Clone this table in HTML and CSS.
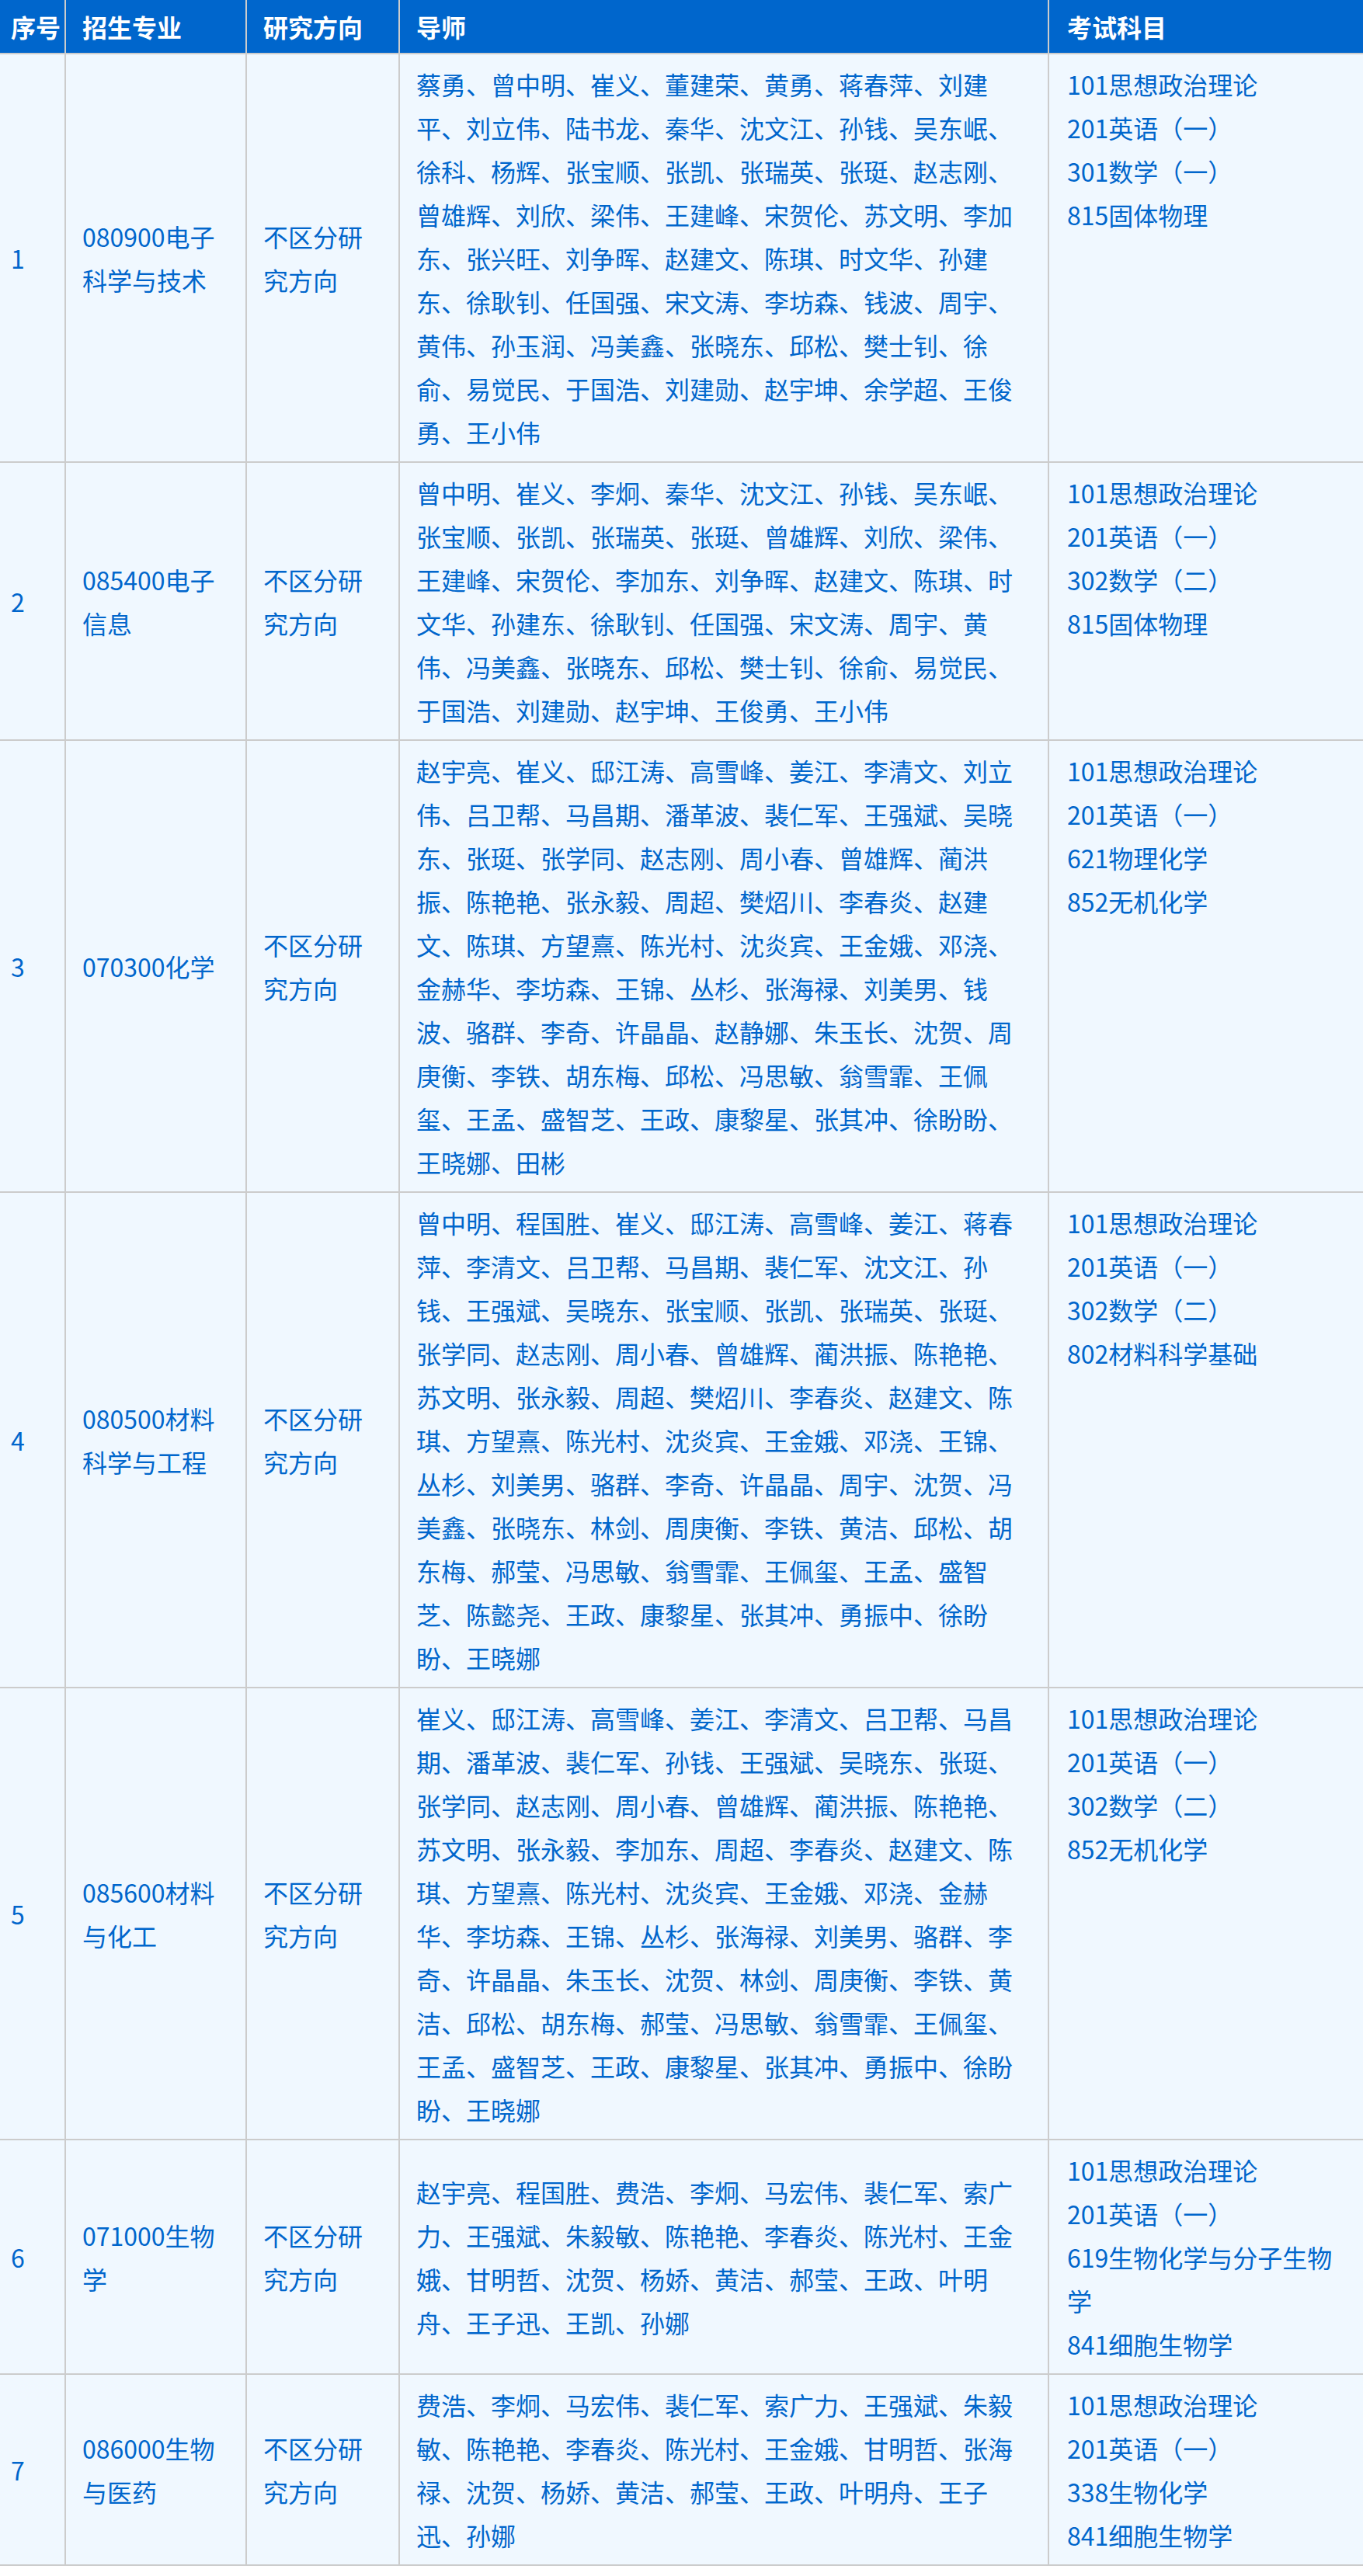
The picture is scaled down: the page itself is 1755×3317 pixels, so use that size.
FILE: index.html
```html
<!DOCTYPE html>
<html lang="zh-CN">
<head>
<meta charset="utf-8">
<title>招生专业与导师</title>
<link rel="stylesheet" href="styles.css">
</head>
<body>
<table class="plan">
  <colgroup>
    <col class="c-no">
    <col class="c-major">
    <col class="c-dir">
    <col class="c-tutor">
    <col class="c-exam">
  </colgroup>
  <thead>
    <tr>
      <th class="no">序号</th>
      <th>招生专业</th>
      <th>研究方向</th>
      <th>导师</th>
      <th class="exam">考试科目</th>
    </tr>
  </thead>
  <tbody>
    <tr>
      <td class="no">1</td>
      <td>080900电子科学与技术</td>
      <td>不区分研究方向</td>
      <td>蔡勇、曾中明、崔义、董建荣、黄勇、蒋春萍、刘建平、刘立伟、陆书龙、秦华、沈文江、孙钱、吴东岷、徐科、杨辉、张宝顺、张凯、张瑞英、张珽、赵志刚、曾雄辉、刘欣、梁伟、王建峰、宋贺伦、苏文明、李加东、张兴旺、刘争晖、赵建文、陈琪、时文华、孙建东、徐耿钊、任国强、宋文涛、李坊森、钱波、周宇、黄伟、孙玉润、冯美鑫、张晓东、邱松、樊士钊、徐俞、易觉民、于国浩、刘建勋、赵宇坤、余学超、王俊勇、王小伟</td>
      <td class="exam">101思想政治理论<br>201英语（一）<br>301数学（一）<br>815固体物理</td>
    </tr>
    <tr>
      <td class="no">2</td>
      <td>085400电子信息</td>
      <td>不区分研究方向</td>
      <td>曾中明、崔义、李炯、秦华、沈文江、孙钱、吴东岷、张宝顺、张凯、张瑞英、张珽、曾雄辉、刘欣、梁伟、王建峰、宋贺伦、李加东、刘争晖、赵建文、陈琪、时文华、孙建东、徐耿钊、任国强、宋文涛、周宇、黄伟、冯美鑫、张晓东、邱松、樊士钊、徐俞、易觉民、于国浩、刘建勋、赵宇坤、王俊勇、王小伟</td>
      <td class="exam">101思想政治理论<br>201英语（一）<br>302数学（二）<br>815固体物理</td>
    </tr>
    <tr>
      <td class="no">3</td>
      <td>070300化学</td>
      <td>不区分研究方向</td>
      <td>赵宇亮、崔义、邸江涛、高雪峰、姜江、李清文、刘立伟、吕卫帮、马昌期、潘革波、裴仁军、王强斌、吴晓东、张珽、张学同、赵志刚、周小春、曾雄辉、蔺洪振、陈艳艳、张永毅、周超、樊炤川、李春炎、赵建文、陈琪、方望熹、陈光村、沈炎宾、王金娥、邓浇、金赫华、李坊森、王锦、丛杉、张海禄、刘美男、钱波、骆群、李奇、许晶晶、赵静娜、朱玉长、沈贺、周庚衡、李铁、胡东梅、邱松、冯思敏、翁雪霏、王佩玺、王孟、盛智芝、王政、康黎星、张其冲、徐盼盼、王晓娜、田彬</td>
      <td class="exam">101思想政治理论<br>201英语（一）<br>621物理化学<br>852无机化学</td>
    </tr>
    <tr>
      <td class="no">4</td>
      <td>080500材料科学与工程</td>
      <td>不区分研究方向</td>
      <td>曾中明、程国胜、崔义、邸江涛、高雪峰、姜江、蒋春萍、李清文、吕卫帮、马昌期、裴仁军、沈文江、孙钱、王强斌、吴晓东、张宝顺、张凯、张瑞英、张珽、张学同、赵志刚、周小春、曾雄辉、蔺洪振、陈艳艳、苏文明、张永毅、周超、樊炤川、李春炎、赵建文、陈琪、方望熹、陈光村、沈炎宾、王金娥、邓浇、王锦、丛杉、刘美男、骆群、李奇、许晶晶、周宇、沈贺、冯美鑫、张晓东、林剑、周庚衡、李铁、黄洁、邱松、胡东梅、郝莹、冯思敏、翁雪霏、王佩玺、王孟、盛智芝、陈懿尧、王政、康黎星、张其冲、勇振中、徐盼盼、王晓娜</td>
      <td class="exam">101思想政治理论<br>201英语（一）<br>302数学（二）<br>802材料科学基础</td>
    </tr>
    <tr>
      <td class="no">5</td>
      <td>085600材料与化工</td>
      <td>不区分研究方向</td>
      <td>崔义、邸江涛、高雪峰、姜江、李清文、吕卫帮、马昌期、潘革波、裴仁军、孙钱、王强斌、吴晓东、张珽、张学同、赵志刚、周小春、曾雄辉、蔺洪振、陈艳艳、苏文明、张永毅、李加东、周超、李春炎、赵建文、陈琪、方望熹、陈光村、沈炎宾、王金娥、邓浇、金赫华、李坊森、王锦、丛杉、张海禄、刘美男、骆群、李奇、许晶晶、朱玉长、沈贺、林剑、周庚衡、李铁、黄洁、邱松、胡东梅、郝莹、冯思敏、翁雪霏、王佩玺、王孟、盛智芝、王政、康黎星、张其冲、勇振中、徐盼盼、王晓娜</td>
      <td class="exam">101思想政治理论<br>201英语（一）<br>302数学（二）<br>852无机化学</td>
    </tr>
    <tr>
      <td class="no">6</td>
      <td>071000生物学</td>
      <td>不区分研究方向</td>
      <td>赵宇亮、程国胜、费浩、李炯、马宏伟、裴仁军、索广力、王强斌、朱毅敏、陈艳艳、李春炎、陈光村、王金娥、甘明哲、沈贺、杨娇、黄洁、郝莹、王政、叶明舟、王子迅、王凯、孙娜</td>
      <td class="exam">101思想政治理论<br>201英语（一）<br>619生物化学与分子生物学<br>841细胞生物学</td>
    </tr>
    <tr>
      <td class="no">7</td>
      <td>086000生物与医药</td>
      <td>不区分研究方向</td>
      <td>费浩、李炯、马宏伟、裴仁军、索广力、王强斌、朱毅敏、陈艳艳、李春炎、陈光村、王金娥、甘明哲、张海禄、沈贺、杨娇、黄洁、郝莹、王政、叶明舟、王子迅、孙娜</td>
      <td class="exam">101思想政治理论<br>201英语（一）<br>338生物化学<br>841细胞生物学</td>
    </tr>
  </tbody>
</table>
</body>
</html>
```

FILE: styles.css
```css
html, body {
  margin: 0;
  padding: 0;
  background: #ffffff;
}

body {
  font-family: "Noto Sans CJK SC", "Noto Sans", sans-serif;
  font-size: 32px;
  color: #0066cc;
}

.plan {
  width: 1755px;
  table-layout: fixed;
  border-collapse: collapse;
}

.c-no { width: 84px; }
.c-major { width: 233px; }
.c-dir { width: 197px; }
.c-tutor { width: 836px; }
.c-exam { width: 405px; }

.plan th,
.plan td {
  border: 2px solid #cccccc;
  text-align: left;
  line-height: 56px;
}

.plan tr > :first-child {
  border-left: none;
}

.plan tr > :last-child {
  border-right: none;
}

.plan thead tr > * {
  border-top: none;
}

.plan th {
  background: #0066cc;
  color: #ffffff;
  font-weight: 700;
  padding: 6px 21px;
  vertical-align: middle;
}

.plan td {
  background: #f0f8ff;
  padding: 10px 21px;
  vertical-align: middle;
  word-break: normal;
}

.plan .no {
  padding-left: 14px;
  padding-right: 2px;
}

.plan td.exam {
  vertical-align: top;
  padding-left: 23px;
}

.plan th.exam {
  padding-left: 23px;
}
```
